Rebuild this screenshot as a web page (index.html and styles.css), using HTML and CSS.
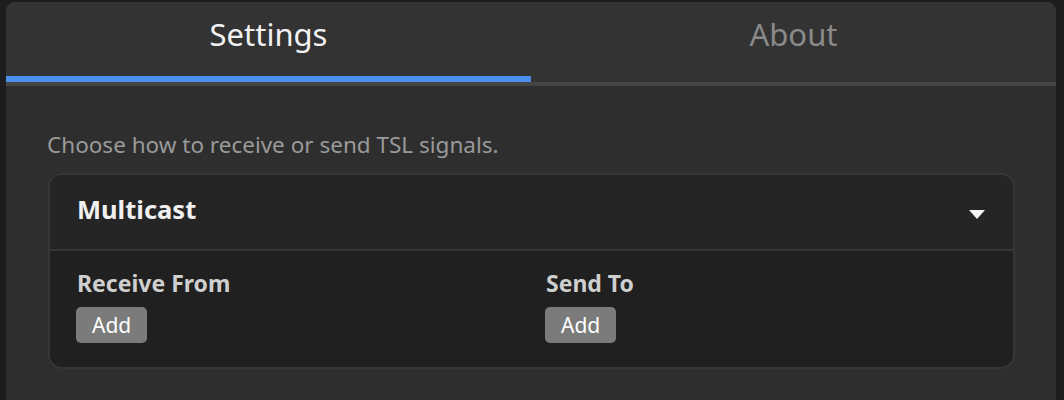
FILE: index.html
```html
<!DOCTYPE html>
<html lang="en">
<head>
<meta charset="utf-8">
<title>Settings</title>
<link rel="stylesheet" href="styles.css">
</head>
<body>
<div class="panel">
  <div class="tabs">
    <div class="tab active">Settings</div>
    <div class="tab">About</div>
  </div>
  <div class="content">
    <p class="desc">Choose how to receive or send TSL signals.</p>
    <div class="card">
      <div class="card-head">
        <span class="card-title">Multicast</span>
        <span class="caret"></span>
      </div>
      <div class="card-body">
        <div class="col">
          <div class="label">Receive From</div>
          <button class="btn">Add</button>
        </div>
        <div class="col">
          <div class="label">Send To</div>
          <button class="btn">Add</button>
        </div>
      </div>
    </div>
  </div>
</div>
</body>
</html>
```
FILE: styles.css
```css
html, body {
  margin: 0;
  height: 100%;
}
body {
  background: #1d1d1d;
  padding: 2px 8px 0 6px;
  box-sizing: border-box;
  font-family: "Noto Sans", "Open Sans", sans-serif;
  overflow: hidden;
}
.panel {
  background: #2e2e2e;
  border-radius: 9px 9px 0 0;
  height: 100%;
  overflow: hidden;
}
.tabs {
  display: flex;
  background: #333333;
  border-bottom: 4px solid #454545;
}
.tab {
  flex: 1;
  text-align: center;
  height: 66px;
  padding-top: 8px;
  box-sizing: content-box;
  font-size: 31px;
  line-height: 48px;
  color: #8a8a8a;
  border-bottom: 6px solid transparent;
}
.tab.active {
  color: #f2f2f2;
  border-bottom-color: #4a8fec;
}
.content {
  padding: 0 41px 0 42px;
}
.desc {
  margin: 0 0 0 -1px;
  padding-top: 44px;
  font-size: 22.5px;
  line-height: 30px;
  color: #9a9a9a;
}
.card {
  margin-top: 13px;
  background: #202020;
  border: 2px solid #363636;
  border-radius: 14px;
  overflow: hidden;
}
.card-head {
  display: flex;
  align-items: center;
  justify-content: space-between;
  height: 74px;
  padding: 0 28px 0 27px;
  background: #252525;
  border-bottom: 2px solid #363636;
}
.card-title {
  font-size: 25.5px;
  font-weight: 700;
  color: #f0f0f0;
  margin-top: -6px;
}
.caret {
  width: 0;
  height: 0;
  border-left: 8.5px solid transparent;
  border-right: 8.5px solid transparent;
  border-top: 9px solid #f5f5f5;
  margin-top: 4px;
}
.card-body {
  display: grid;
  grid-template-columns: 1fr 1fr;
  column-gap: 29px;
  padding: 16px 28px 24px 26px;
}
.col {
  display: flex;
  flex-direction: column;
  align-items: flex-start;
}
.label {
  font-size: 23px;
  font-weight: 700;
  color: #cfcfcf;
  line-height: 32px;
  padding-left: 1px;
}
.btn {
  margin-top: 8px;
  height: 36px;
  padding: 0 16px;
  border: none;
  border-radius: 5px;
  background: #7b7b7b;
  color: #ffffff;
  font-family: inherit;
  font-size: 21px;
  line-height: 36px;
}
```
